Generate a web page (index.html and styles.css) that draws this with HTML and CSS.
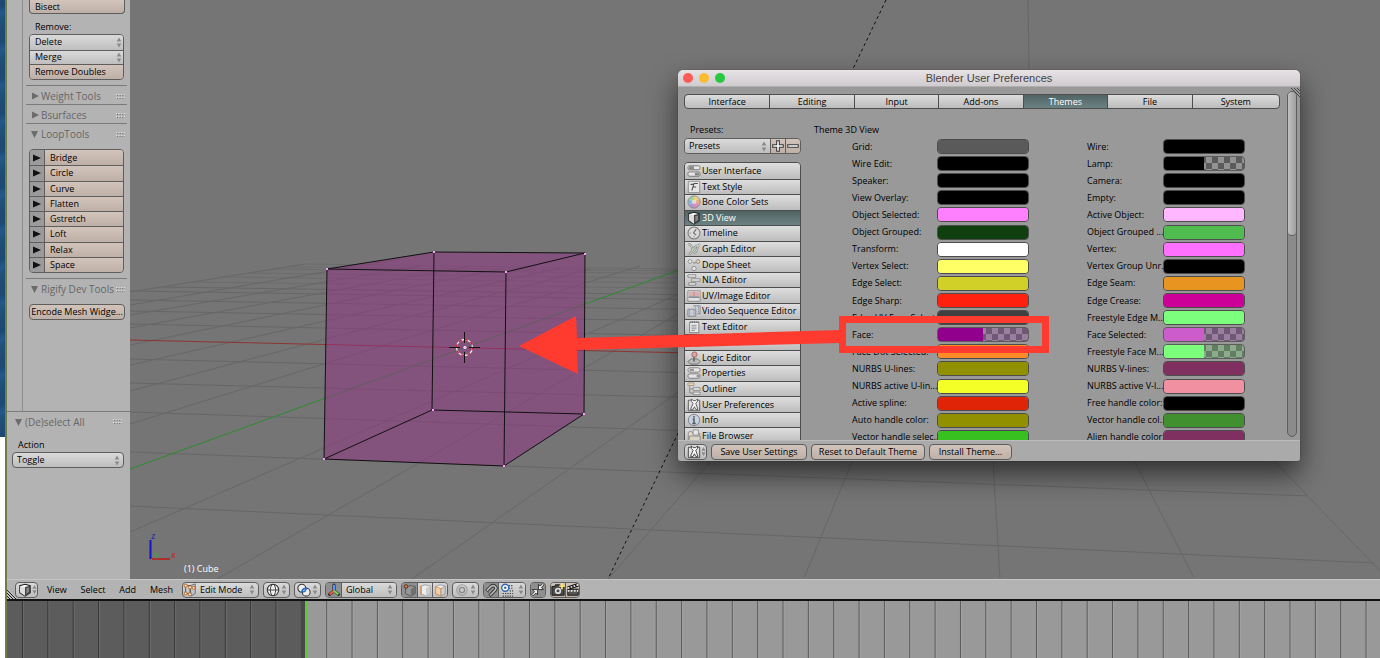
FILE: index.html
```html
<!DOCTYPE html>
<html lang="en">
<head>
<meta charset="utf-8">
<title>Blender</title>
<link rel="stylesheet" href="styles.css">
</head>
<body>
<svg class="defs" aria-hidden="true">
  <symbol id="arrows" viewBox="0 0 6 12"><path d="M3 0.5 5.5 5H0.5zM3 11.5 5.5 7H0.5z" fill="#8a8a8a"/></symbol>
  <symbol id="grip" viewBox="0 0 9 5"><path d="M0 .5h9M0 3.5h9" stroke="#e6e6e6" stroke-dasharray="1 1.6"/><path d="M1 1.5h9M1 4.500h9" stroke="#777" stroke-dasharray="1 1.600"/></symbol>
  <symbol id="hatch" viewBox="0 0 9 9"><path d="M0 0l9 9M0 3l6 6M0 6l3 3" stroke="#222"/><path d="M1 0l8 8M0 2l7 7M0 5l4 4" stroke="#ddd" stroke-width=".5"/></symbol>
  <symbol id="hatch-top" viewBox="0 0 9 9"><path d="M0 0l9 9M3 0l6 6M6 0l3 3" stroke="#333" stroke-width=".8"/></symbol>
  <symbol id="down" viewBox="0 0 8 8"><path d="M0 1h7L3.500 8z" fill="#6b6b6b"/></symbol>
  <symbol id="right" viewBox="0 0 8 8"><path d="M1 0.500v7L8 4z" fill="#6b6b6b"/></symbol>
  <symbol id="play" viewBox="0 0 8 8"><path d="M0 0.500v7L8 4z" fill="#111"/></symbol>
  <symbol id="cube" viewBox="0 0 16 16"><path d="M8 1.500 14 3v8l-6 4-6-4V3z" fill="#fff" stroke="#222" stroke-width="1.200"/><path d="M8 4.500 14 3v8l-6 4z" fill="#444"/><path d="M2.500 3.500 8 5v9.500l-5.500-4z" fill="#ddd"/><path d="M9.500 6 12.500 5v5l-3 2.500z" fill="#888"/></symbol>
  <symbol id="ui" viewBox="0 0 16 16"><g stroke="#555" fill="#eee"><rect x="1" y="2" width="14" height="4.500" rx="2"/><rect x="1" y="9" width="14" height="5" rx="2"/></g><path d="M2 4.200h6M9 11.500h5" stroke="#777" stroke-width="3"/><path d="M3 8h8" stroke="#aaa"/></symbol>
  <symbol id="style" viewBox="0 0 16 16"><path d="M1.500 1.500h13v13h-13z" fill="#eee" stroke="#777"/><path d="M5.500 12 8 4h4.500M6.500 8h4M4 5h3" fill="none" stroke="#333" stroke-width="1.200"/></symbol>
  <symbol id="colors" viewBox="0 0 16 16"><path d="M8 8V1a7 7 0 0 1 6 3.500z" fill="#f3d36b"/><path d="M8 8l6-3.500a7 7 0 0 1 0 7z" fill="#f0a36f"/><path d="M8 8l6 3.500A7 7 0 0 1 8 15z" fill="#dd7fb8"/><path d="M8 8v7a7 7 0 0 1-6-3.500z" fill="#a98ae0"/><path d="M8 8l-6 3.500a7 7 0 0 1 0-7z" fill="#75b4e4"/><path d="M8 8 2 4.500A7 7 0 0 1 8 1z" fill="#92d08d"/><circle cx="8" cy="8" r="7" fill="none" stroke="#777"/><circle cx="8" cy="8" r="2.500" fill="#fff" opacity=".6"/></symbol>
  <symbol id="clock" viewBox="0 0 16 16"><circle cx="8" cy="8" r="6.800" fill="#ddd" stroke="#666" stroke-width="1.200"/><path d="M10.500 3.500 7.500 8l3 2.500" fill="none" stroke="#555" stroke-width="1.300"/><path d="M3 8h1.500M8 13v-1.500" stroke="#777"/></symbol>
  <symbol id="graph" viewBox="0 0 16 16"><path d="M1 3c6-2 4 9 8 9 3 0 2-9 6-9M2 14c3 0 4-5 6-7s3-4 7-3" fill="none" stroke="#777" stroke-width="2.600"/><path d="M1 3c6-2 4 9 8 9 3 0 2-9 6-9M2 14c3 0 4-5 6-7s3-4 7-3" fill="none" stroke="#c5d2c0" stroke-width="1.200"/></symbol>
  <symbol id="dope" viewBox="0 0 16 16"><g fill="#eee" stroke="#777"><circle cx="3.500" cy="4" r="2.200"/><circle cx="12.500" cy="4" r="2.200" fill="#f0c8a0"/><circle cx="8" cy="12" r="2.500"/></g><path d="M7 5.500h3" stroke="#555"/></symbol>
  <symbol id="nla" viewBox="0 0 16 16"><g fill="#e4e4e4" stroke="#777"><path d="M1 2h9v3H1zM5 6.500h10v3H5zM2 11h8v3H2z"/></g></symbol>
  <symbol id="image" viewBox="0 0 16 16"><path d="M1 2h14v12H1z" fill="#e8e8e8" stroke="#777"/><path d="M2 3h12v5H2z" fill="#dca9a9"/><path d="M2 8.500h12v1.500H2z" fill="#5a5a6a"/><path d="M8 3v5" stroke="#b77"/></symbol>
  <symbol id="video" viewBox="0 0 16 16"><path d="M1 6h9v8H1zM7 2h8v9h-3" fill="#c9ced8" stroke="#6a7280"/><path d="M3 7v6M8 7v6M13 3v7M9.500 3v2" stroke="#6a7280" stroke-dasharray="1.500 1"/></symbol>
  <symbol id="text" viewBox="0 0 16 16"><path d="M3 2.500h10.500v12H3z" fill="#f2f2f2" stroke="#666"/><path d="M5 6h6M5 8h6M5 10h6M5 12h4" stroke="#778"/><path d="M4 2.500h9" stroke="#444" stroke-width="2" stroke-dasharray="1 1"/></symbol>
  <symbol id="node" viewBox="0 0 16 16"><path d="M1 3h6v6H1zM9 7h6v6H9zM7 6h2v4" fill="#ddd" stroke="#777"/></symbol>
  <symbol id="logic" viewBox="0 0 16 16"><path d="M1 12l4-3h7l3 3-3 3H4z" fill="#b9b9b9" stroke="#555"/><path d="M8 12V5" stroke="#555" stroke-width="2"/><circle cx="8.500" cy="4" r="3" fill="#d99" stroke="#844"/></symbol>
  <symbol id="props" viewBox="0 0 16 16"><g fill="#eee" stroke="#666"><rect x="1" y="2" width="14" height="5" rx="2.500"/><rect x="1" y="9" width="14" height="5" rx="2.500"/></g><path d="M3 4.500h5M11 11.500h3" stroke="#888" stroke-width="2.500"/></symbol>
  <symbol id="outliner" viewBox="0 0 16 16"><path d="M3 4v8.500h4M3 8h4" fill="none" stroke="#777"/><path d="M1 1h7v3H1z" fill="#f0d3a0" stroke="#987"/><path d="M7 6.500h8v3H7zM7 11.500h8v3H7z" fill="#eee" stroke="#777"/></symbol>
  <symbol id="prefs" viewBox="0 0 16 16"><path d="M4.500 2.500h-3v12h13v-12h-2" fill="#e4e4e4" stroke="#333"/><path d="M5 1v3l2 2-3 7h3l1.500-3 1.500 3h2.500L10 6l2-2V1l-2 2H7z" fill="#fff" stroke="#333"/></symbol>
  <symbol id="info" viewBox="0 0 16 16"><circle cx="8" cy="8" r="6.500" fill="#c8d4e4" stroke="#667"/><path d="M8 3.500v2M6.500 7H8v4.500M6 12h4" stroke="#345" stroke-width="1.800" fill="none"/></symbol>
  <symbol id="files" viewBox="0 0 16 16"><path d="M1.500 14V5l1-2h3l1 2h8v9z" fill="#eadfc4" stroke="#777"/><path d="M7 1h6v6H7z" fill="#eee" stroke="#777"/><path d="M2 14l1-6h12v6z" fill="#ddd6c4" stroke="#777"/></symbol>
  <symbol id="edit" viewBox="0 0 16 16"><path d="M8 3l6-2v11l-5 3z" fill="#c4c4c4" stroke="#666"/><path d="M3 3h5v9H3z" fill="none" stroke="#5a4636"/><g fill="#fff" stroke="#b5682c"><path d="M1.500 1.500h3v3h-3zM1.500 10.500h3v3h-3zM6.500 3.500h3v3h-3zM6.500 11.500h3v3h-3zM11 4h2.500v3H11z"/></g></symbol>
  <symbol id="globe" viewBox="0 0 16 16"><circle cx="8" cy="8" r="6.500" fill="#eee" stroke="#333" stroke-width="1.200"/><ellipse cx="8" cy="8" rx="3" ry="6.500" fill="none" stroke="#333"/><path d="M1.500 8h13" stroke="#333"/></symbol>
  <symbol id="pivot" viewBox="0 0 16 16"><circle cx="5.500" cy="6" r="4.500" fill="#eee" stroke="#333" stroke-width="1.200"/><circle cx="10.500" cy="10.500" r="4.500" fill="#eee" stroke="#333" stroke-width="1.200"/><path d="M5.500 10.500a5 5 0 0 1 5-4.500 5 5 0 0 1-5 4.500z" fill="#acd0ff" stroke="#2a6ac0" stroke-width="1.800"/></symbol>
  <symbol id="axes" viewBox="0 0 16 16"><g stroke="#222" stroke-width="3.600" stroke-linecap="round"><path d="M8 8.500V2.500M8 9l-5 4M8 9l5 4"/></g><path d="M8 9V2" stroke="#5b94f0" stroke-width="2.400"/><path d="M8 9l-5 4" stroke="#ef5c4a" stroke-width="2.400"/><path d="M8 9l5 4" stroke="#7bd05c" stroke-width="2.400"/></symbol>
  <symbol id="vert" viewBox="0 0 16 16"><path d="M8 3l6 1v8l-5 3-6-3V5z" fill="#969696" stroke="#555"/><path d="M9 7l5-3v8l-5 3z" fill="#707070"/><circle cx="3.500" cy="4" r="2" fill="#f0823a" stroke="#422"/></symbol>
  <symbol id="edge" viewBox="0 0 16 16"><path d="M8 2l6 1.500V12l-5 3-6-3V4z" fill="#eee" stroke="#999"/><path d="M9 6l5-2.500V12l-5 3z" fill="#ccc"/><path d="M3.500 3v10" stroke="#dc9862" stroke-width="2"/></symbol>
  <symbol id="facesel" viewBox="0 0 16 16"><path d="M8 2l6 1.500V12l-5 3-6-3V4z" fill="#eee" stroke="#999"/><path d="M3 4l6 2.500V15l-6-3z" fill="#f6cda8" stroke="#d08a52"/><path d="M9 6.500l5-3V12l-5 3z" fill="#ccc" stroke="#a98"/></symbol>
  <symbol id="ring" viewBox="0 0 16 16"><circle cx="8" cy="8" r="6" fill="none" stroke="#999" stroke-width="1.200"/><circle cx="8" cy="8" r="3" fill="#ccc" stroke="#888" stroke-width="1.600"/></symbol>
  <symbol id="magnet" viewBox="0 0 16 16"><path d="M3 9l5-5c4-3 8 2 4 5l-5 5" fill="none" stroke="#333" stroke-width="4"/><path d="M3 9l5-5c4-3 8 2 4 5l-5 5" fill="none" stroke="#b5b5b5" stroke-width="2"/><path d="M2 8l3 3M5 13l3 3" stroke="#444"/></symbol>
  <symbol id="snap" viewBox="0 0 16 16"><path d="M10 3h5M10 6h5M3 12h12M3 15h12M11 9h4" stroke="#444" stroke-dasharray="1.500 1.200" stroke-width="1.300"/><circle cx="6" cy="5.500" r="4" fill="#fff" stroke="#3465a5" stroke-width="1.600"/><circle cx="6" cy="5.500" r="1.400" fill="#3465a5"/></symbol>
  <symbol id="pick" viewBox="0 0 16 16"><path d="M1.500 7.500h6v6l-2-2-3 3-1.500-1.500 3-3zM8.500 1.500l2 2 3-3L15 2l-3 3 2 2.500H8.500z" fill="#f4f4f4" stroke="#222"/></symbol>
  <symbol id="camera" viewBox="0 0 16 16"><path d="M1 4h3l1-2h5l1 2h4v10H1z" fill="#4a4a4a" stroke="#111"/><circle cx="8" cy="9" r="3.600" fill="#ddd"/><circle cx="8" cy="9" r="1.700" fill="#444"/><path d="M12.500 0v7M9.500 3.500h6" stroke="#f7e36b" stroke-width="2"/></symbol>
  <symbol id="clap" viewBox="0 0 16 16"><path d="M2 7h12v7H2z" fill="#555" stroke="#111"/><path d="M2 9h12" stroke="#eee" stroke-width="2" stroke-dasharray="2 1.500"/><path d="M2 6l12-4" stroke="#111" stroke-width="4"/><path d="M2 6l12-4" stroke="#eee" stroke-width="2" stroke-dasharray="2 1.500"/></symbol>
  <symbol id="plus" viewBox="0 0 16 16"><path d="M6.500 2h3v4.500H14v3H9.500V14h-3V9.500H2v-3h4.500z" fill="#fff" stroke="#333" stroke-width="1.200"/></symbol>
  <symbol id="minus" viewBox="0 0 16 16"><path d="M2 6.500h12v3H2z" fill="#fff" stroke="#333" stroke-width="1.200"/></symbol>
</svg>

<div class="desktop">
  <div class="wallpaper"></div>
  <div class="app">
    <main class="work">
      <aside class="shelf">
        <div class="tools">
          <button class="btn lone">Bisect</button>
          <p class="caption">Remove:</p>
          <div class="stack three">
            <button class="btn light">Delete<svg class="arr"><use href="#arrows"/></svg></button>
            <button class="btn light">Merge<svg class="arr"><use href="#arrows"/></svg></button>
            <button class="btn">Remove Doubles</button>
          </div>
          <button class="panel"><svg class="tri"><use href="#right"/></svg>Weight Tools<svg class="grip"><use href="#grip"/></svg></button>
          <button class="panel"><svg class="tri"><use href="#right"/></svg>Bsurfaces<svg class="grip"><use href="#grip"/></svg></button>
          <button class="panel open"><svg class="tri"><use href="#down"/></svg>LoopTools<svg class="grip"><use href="#grip"/></svg></button>
          <div class="stack loop">
            <div><button class="exp" aria-label="Bridge options"><svg class="tri"><use href="#play"/></svg></button><button class="btn">Bridge</button></div>
            <div><button class="exp" aria-label="Circle options"><svg class="tri"><use href="#play"/></svg></button><button class="btn">Circle</button></div>
            <div><button class="exp" aria-label="Curve options"><svg class="tri"><use href="#play"/></svg></button><button class="btn">Curve</button></div>
            <div><button class="exp" aria-label="Flatten options"><svg class="tri"><use href="#play"/></svg></button><button class="btn">Flatten</button></div>
            <div><button class="exp" aria-label="Gstretch options"><svg class="tri"><use href="#play"/></svg></button><button class="btn">Gstretch</button></div>
            <div><button class="exp" aria-label="Loft options"><svg class="tri"><use href="#play"/></svg></button><button class="btn">Loft</button></div>
            <div><button class="exp" aria-label="Relax options"><svg class="tri"><use href="#play"/></svg></button><button class="btn">Relax</button></div>
            <div><button class="exp" aria-label="Space options"><svg class="tri"><use href="#play"/></svg></button><button class="btn">Space</button></div>
          </div>
          <button class="panel open"><svg class="tri"><use href="#down"/></svg>Rigify Dev Tools<svg class="grip"><use href="#grip"/></svg></button>
          <button class="btn encode">Encode Mesh Widge...</button>
        </div>
        <div class="operator">
          <button class="panel"><svg class="tri"><use href="#down"/></svg>(De)select All<svg class="grip"><use href="#grip"/></svg></button>
          <label class="caption" for="action">Action</label>
          <div class="pick"><select id="action"><option>Toggle</option></select><svg class="arr"><use href="#arrows"/></svg></div>
        </div>
      </aside>
      <section class="view">
        <svg class="scene" viewBox="130 0 1250 579" preserveAspectRatio="xMinYMin slice">
          <g stroke="#676767" fill="none" stroke-width="1">
            <path d="M130 506 1374 563M130 452 1308 496M130 412 900 438M130 383 900 403M130 359 900 378M130 324 900 340M130 311 900 325M130 300 900 313M130 291 900 303M163 287 900 298"/>
            <path d="M194 282 900 291M222 277 900 286M248 273 900 281M272 269 900 276M290 267 900 273M305 264 900 272" stroke="#6c6c6c"/>
            <path d="M130 292 305 264M130 305 400 259M130 315 420 266M130 328 470 266M130 345 500 269M130 365 560 268M130 391 590 269M130 424 640 266M130 532 677 295M217 579 720 290M412 579 720 363M609 578 710 462M804 578 852 462M1000 578 993 462M1194 578 1135 462M1380 571 1275 462"/>
            <path d="M1028 0 1029 70" stroke="#666"/>
          </g>
          <path d="M130 340 690 353" stroke="#8e3434"/>
          <path d="M130 469 690 266" stroke="#2f8a2f"/>
          <path d="M886 0 608 579" stroke="#111" stroke-dasharray="3 3" stroke-width="1"/>
          <path d="M327 269 434 252 585 253 584 414 504 466 324 459z" fill="#913287" fill-opacity=".5"/>
          <path d="M327 269 434 252 585 253 506 272zM324 459 432 410 584 414 504 466zM327 269 324 459M434 252 432 410M585 253 584 414M506 272 504 466" stroke="#111" fill="none"/>
          <path d="M326 269h2M433 252h2M584 254h2M505 272h2M432 410h2M583 414h2M323 459h2M503 466h2" stroke="#ff9cff" stroke-width="2"/>
          <circle cx="464.500" cy="347.500" r="8" fill="none" stroke="#eee" stroke-width="1.300"/>
          <circle cx="464.500" cy="347.500" r="8" fill="none" stroke="#c8202c" stroke-width="1.300" stroke-dasharray="3.140"/>
          <path d="M449 347.500h11M469 347.500h11M464.500 332v11M464.500 352v11" stroke="#111"/>
          <circle cx="465" cy="347.500" r="2.200" fill="#f2c0ee" stroke="#444" stroke-width=".7"/>
          <path d="M150.500 559v-19" stroke="#1414c8" stroke-width="2"/><path d="M152 559h18" stroke="#c01414" stroke-width="1.500"/>
          <path d="M154 553l2 2.500 2-2.500M156 555.500v3" stroke="#28b428" fill="none"/>
          <text x="151" y="539" class="axis" fill="#1818c0">z</text>
          <text x="171" y="558" class="axis" fill="#c81818">x</text>
          <text x="184" y="572" class="name" fill="#fff">(1) Cube</text>
        </svg>
      </section>
    </main>

    <header class="bar">
      <svg class="corner"><use href="#hatch"/></svg>
      <button class="chip ico" aria-label="Editor type"><svg><use href="#cube"/></svg><svg class="arr"><use href="#arrows"/></svg></button>
      <nav class="menus"><button>View</button><button>Select</button><button>Add</button><button>Mesh</button></nav>
      <div class="pick mode"><svg class="lead"><use href="#edit"/></svg><select aria-label="Mode"><option>Edit Mode</option></select><svg class="arr"><use href="#arrows"/></svg></div>
      <button class="chip wide" aria-label="Shading"><svg><use href="#globe"/></svg><svg class="arr"><use href="#arrows"/></svg></button>
      <button class="chip wide" aria-label="Pivot"><svg><use href="#pivot"/></svg><svg class="arr"><use href="#arrows"/></svg></button>
      <div class="joined orient"><button class="on" aria-label="Manipulator"><svg><use href="#axes"/></svg></button><div class="pick"><select aria-label="Orientation"><option>Global</option></select><svg class="arr"><use href="#arrows"/></svg></div></div>
      <div class="joined modes"><button class="on" aria-label="Vertex"><svg><use href="#vert"/></svg></button><button aria-label="Edge"><svg><use href="#edge"/></svg></button><button aria-label="Face"><svg><use href="#facesel"/></svg></button></div>
      <button class="chip wide" aria-label="Proportional editing"><svg><use href="#ring"/></svg><svg class="arr"><use href="#arrows"/></svg></button>
      <div class="joined"><button class="on" aria-label="Snap"><svg><use href="#magnet"/></svg></button><button class="snapto" aria-label="Snap element"><svg><use href="#snap"/></svg><svg class="arr"><use href="#arrows"/></svg></button></div>
      <div class="joined"><button class="on" aria-label="Automerge"><svg><use href="#pick"/></svg></button></div>
      <div class="joined warm"><button aria-label="Render"><svg><use href="#camera"/></svg></button><button aria-label="Animation"><svg><use href="#clap"/></svg></button></div>
    </header>

    <section class="timeline">
      <svg width="100%" height="100%">
        <defs><pattern id="ticks" x="15" width="25.350" height="57" patternUnits="userSpaceOnUse"><path d="M.5 0v57" stroke="#000" stroke-opacity=".42"/><path d="M1.500 0v57" stroke="#fff" stroke-opacity=".1"/></pattern></defs>
        <rect width="100%" height="100%" fill="#999"/>
        <rect width="298" height="100%" fill="#5c5c5c"/>
        <rect width="100%" height="100%" fill="url(#ticks)"/>
        <rect x="294" width="4" height="100%" fill="#484848"/>
        <rect x="298" width="3" height="100%" fill="#5ec83a"/>
      </svg>
    </section>

    <section class="window">
      <div class="title"><span class="lights"><i class="red"></i><i class="amber"></i><i class="green"></i></span><h1>Blender User Preferences</h1></div>
      <svg class="resize"><use href="#hatch-top"/></svg>
      <div class="body">
        <div class="content">
          <nav class="tabs"><button>Interface</button><button>Editing</button><button>Input</button><button>Add-ons</button><button class="active">Themes</button><button>File</button><button>System</button></nav>
          <div class="columns">
            <div class="side">
              <label class="caption" for="presets">Presets:</label>
              <div class="joined presets"><div class="pick"><select id="presets"><option>Presets</option></select><svg class="arr"><use href="#arrows"/></svg></div><button aria-label="Add preset"><svg><use href="#plus"/></svg></button><button aria-label="Remove preset"><svg><use href="#minus"/></svg></button></div>
              <div class="list">
                <button><svg><use href="#ui"/></svg>User Interface</button>
                <button><svg><use href="#style"/></svg>Text Style</button>
                <button><svg><use href="#colors"/></svg>Bone Color Sets</button>
                <button class="active"><svg><use href="#cube"/></svg>3D View</button>
                <button><svg><use href="#clock"/></svg>Timeline</button>
                <button><svg><use href="#graph"/></svg>Graph Editor</button>
                <button><svg><use href="#dope"/></svg>Dope Sheet</button>
                <button><svg><use href="#nla"/></svg>NLA Editor</button>
                <button><svg><use href="#image"/></svg>UV/Image Editor</button>
                <button><svg><use href="#video"/></svg>Video Sequence Editor</button>
                <button><svg><use href="#text"/></svg>Text Editor</button>
                <button><svg><use href="#node"/></svg>Node Editor</button>
                <button><svg><use href="#logic"/></svg>Logic Editor</button>
                <button><svg><use href="#props"/></svg>Properties</button>
                <button><svg><use href="#outliner"/></svg>Outliner</button>
                <button><svg><use href="#prefs"/></svg>User Preferences</button>
                <button><svg><use href="#info"/></svg>Info</button>
                <button><svg><use href="#files"/></svg>File Browser</button>
              </div>
            </div>
            <div class="theme">
              <h2>Theme 3D View</h2>
              <div class="fields">
                <div class="col first">
                  <label>Grid:<input type="color" value="#5a5a5a"></label>
                  <label>Wire Edit:<input type="color" value="#000000"></label>
                  <label>Speaker:<input type="color" value="#000000"></label>
                  <label>View Overlay:<input type="color" value="#000000"></label>
                  <label>Object Selected:<input type="color" value="#ff80ff"></label>
                  <label>Object Grouped:<input type="color" value="#0f3f0f"></label>
                  <label>Transform:<input type="color" value="#ffffff"></label>
                  <label>Vertex Select:<input type="color" value="#ffff66"></label>
                  <label>Edge Select:<input type="color" value="#d0d028"></label>
                  <label>Edge Sharp:<input type="color" value="#ff2010"></label>
                  <label>Edge UV Face Select:<input type="color" value="#404040"></label>
                  <label>Face:<span class="alpha violet"><input type="color" value="#91008c"></span></label>
                  <label>Face Dot Selected:<input type="color" value="#ff8c28"></label>
                  <label>NURBS U-lines:<input type="color" value="#909000"></label>
                  <label>NURBS active U-lin...<input type="color" value="#f4ff28"></label>
                  <label>Active spline:<input type="color" value="#e02408"></label>
                  <label>Auto handle color:<input type="color" value="#909000"></label>
                  <label>Vector handle selec...<input type="color" value="#38c020"></label>
                </div>
                <div class="col second">
                  <label>Wire:<input type="color" value="#000000"></label>
                  <label>Lamp:<span class="alpha"><input type="color" value="#000000"></span></label>
                  <label>Camera:<input type="color" value="#000000"></label>
                  <label>Empty:<input type="color" value="#000000"></label>
                  <label>Active Object:<input type="color" value="#ffb8ff"></label>
                  <label>Object Grouped ...<input type="color" value="#50bc50"></label>
                  <label>Vertex:<input type="color" value="#ff70ff"></label>
                  <label>Vertex Group Unr...<input type="color" value="#000000"></label>
                  <label>Edge Seam:<input type="color" value="#e89420"></label>
                  <label>Edge Crease:<input type="color" value="#cc0099"></label>
                  <label>Freestyle Edge M...<input type="color" value="#7cff7c"></label>
                  <label>Face Selected:<span class="alpha violet"><input type="color" value="#cc5ccc"></span></label>
                  <label>Freestyle Face M...<span class="alpha lime"><input type="color" value="#7cff7c"></span></label>
                  <label>NURBS V-lines:<input type="color" value="#803060"></label>
                  <label>NURBS active V-l...<input type="color" value="#f090a0"></label>
                  <label>Free handle color:<input type="color" value="#000000"></label>
                  <label>Vector handle col...<input type="color" value="#409030"></label>
                  <label>Align handle color:<input type="color" value="#803060"></label>
                </div>
              </div>
            </div>
          </div>
        </div>
        <div class="scroll"><div class="thumb"></div></div>
      </div>
      <footer>
        <button class="chip ico" aria-label="Editor type"><svg><use href="#prefs"/></svg><svg class="arr"><use href="#arrows"/></svg></button>
        <button class="btn save">Save User Settings</button>
        <button class="btn reset">Reset to Default Theme</button>
        <button class="btn install">Install Theme...</button>
      </footer>
    </section>
  </div>
  <svg class="callout" aria-hidden="true">
    <rect x="842.500" y="319.500" width="203" height="30" fill="none" stroke="#ff3b30" stroke-width="7"/>
    <path d="M519 346 576 316 577 338 840 330V343L577 350 578 374z" fill="#ff3b30"/>
  </svg>
</div>
</body>
</html>
```
FILE: styles.css
```css
* { box-sizing: border-box; }

body {
  margin: 0;
  overflow: hidden;
  font: 9px/12px "Open Sans", "Noto Sans", sans-serif;
  color: #000;
}

button, select, input { font: inherit; color: inherit; margin: 0; }
button { display: flex; align-items: center; padding: 0; border: 0; background: none; white-space: nowrap; }
svg { display: block; flex: none; }
p, h1, h2 { margin: 0; font: inherit; }
.defs { position: absolute; width: 0; height: 0; }

.desktop { position: relative; display: flex; height: 100vh; background: #fff; }
.wallpaper { width: 5px; height: 437px; background: repeating-linear-gradient(160deg, #1b4a75 0 6px, #24588a 13px, #1f5078 21px, #1b4a75 34px); }
.app {
  position: relative;
  flex: 1;
  min-width: 0;
  display: flex;
  flex-direction: column;
  border-left: 2px solid #6f7d4c;
}
.work { flex: 1; min-height: 0; display: flex; }

/* tool shelf */
.shelf { width: 123px; display: flex; flex-direction: column; background: #b3b3b3; }
.tools {
  flex: 1;
  min-height: 0;
  overflow: hidden;
  margin-left: 15px;
  padding: 0 3px;
  border-left: 1px solid #8c8c8c;
}
.caption { display: block; padding-left: 6px; }
.tools > .caption { margin: 0 3px; padding-top: 7px; height: 20px; }

.btn {
  justify-content: flex-start;
  padding: 0 5px;
  background: linear-gradient(#d3c4bb, #bfb0a7);
}
.btn.light, .pick, .chip, .joined > button { background: linear-gradient(#dadada, #bebebe); }
.btn .arr { margin-left: auto; margin-right: -4px; }
.arr { width: 6px; height: 11px; }
.lone, .encode { width: 96px; margin: 0 3px; height: 16px; border: 1px solid #5e5e5e; border-radius: 4px; }
.lone { height: 14px; border-top: 0; border-radius: 0 0 4px 4px; }
.encode { justify-content: center; padding: 0; }
.stack { display: grid; grid-auto-rows: 1fr; margin: 0 3px 5px; border: 1px solid #5e5e5e; border-radius: 4px; overflow: hidden; }
.stack > * + * { border-top: 1px solid #5e5e5e; }
.three { height: 46px; }
.loop { height: 124px; }
.loop > div { display: flex; }
.loop .btn { flex: 1; }
.exp { width: 15px; justify-content: center; background: #9b9b9b; border-right: 1px solid #5e5e5e; }
.tri { width: 8px; height: 8px; }
.panel {
  width: 100%;
  height: 19px;
  padding: 2px 2px 0 5px;
  gap: 2px;
  border-top: 1px solid #7b7b7b;
  color: #666;
  font-size: 10px;
}
.open { margin-bottom: 7px; }
.grip { width: 9px; height: 5px; margin-left: auto; }
.operator { height: 168px; padding: 0 6px 0 5px; border-top: 1px solid #7b7b7b; }
.operator .panel { border: 0; padding: 0 2px 0 3px; margin-bottom: 8px; }
.operator .caption { height: 13px; }

/* select with its arrows laid over the right end */
.pick {
  display: grid;
  grid-template-columns: 1fr 9px;
  align-items: center;
  height: 16px;
  border: 1px solid #5e5e5e;
  border-radius: 4px;
}
.pick select { grid-area: 1 / 1 / 2 / 3; width: 100%; height: 14px; padding: 0 4px; border: 0; background: none; appearance: none; }
.pick .arr { grid-area: 1 / 2 / 2 / 3; pointer-events: none; }

/* viewport */
.view { flex: 1; min-width: 0; background: #757575; }
.scene { width: 100%; height: 100%; }
.axis, .name { font-size: 9px; }

/* header bar */
.bar {
  position: relative;
  display: flex;
  align-items: center;
  gap: 4px;
  height: 22px;
  padding: 0 8px;
  background: #b3b3b3;
  border-top: 1px solid #c6c6c6;
  border-bottom: 2px solid #111;
}
.bar svg:not(.arr), .chip svg:not(.arr), .joined svg:not(.arr), .list svg { width: 14px; height: 14px; }
.bar .corner { position: absolute; left: 0; bottom: 0; }
.bar svg.corner:not(.arr) { width: 9px; height: 9px; }
.chip { height: 16px; padding: 0 2px; justify-content: space-between; border: 1px solid #5e5e5e; border-radius: 4px; }
.ico { width: 23px; }
.ico .arr { width: 5px; }
.wide { width: 27px; }
.menus { display: flex; justify-content: space-between; width: 126px; margin: 0 5px; }
.mode { width: 77px; grid-template-columns: 16px 1fr 9px; }
.mode .lead { grid-area: 1 / 1; }
.mode select { grid-area: 1 / 2 / 2 / 4; padding: 0 1px; }
.mode .arr { grid-area: 1 / 3; }
.joined { display: flex; height: 16px; border: 1px solid #5e5e5e; border-radius: 4px; overflow: hidden; }
.joined > * + * { border: 0; border-left: 1px solid #5e5e5e; border-radius: 0; }
.joined > button { width: 14px; justify-content: center; }
.modes > button, .orient > button, .presets > button { width: 15px; }
.joined > button.on { background: #8f8f8f; }
.joined > .snapto { width: 27px; gap: 4px; }
.joined .pick { height: 14px; border-radius: 0; }
.orient { width: 72px; }
.orient .pick { flex: 1; }
.warm > button, .presets > button { background: linear-gradient(#d3c4bb, #bfb0a7); }
.timeline { height: 57px; }

/* preferences window */
.window {
  position: absolute;
  left: 671px;
  top: 70px;
  width: 622px;
  height: 391px;
  display: flex;
  flex-direction: column;
  border-radius: 5px 5px 3px 3px;
  overflow: hidden;
  background: #999;
  box-shadow: 0 0 1px rgba(0, 0, 0, .6), 0 13px 28px rgba(0, 0, 0, .6);
}
.resize { position: absolute; right: 0; top: 18px; width: 9px; height: 9px; }
.title {
  display: grid;
  grid-template-columns: 1fr auto 1fr;
  align-items: center;
  height: 17px;
  padding: 0 5px;
  background: linear-gradient(#e6e2e6, #cfcbcf);
  border-bottom: 1px solid #b0b0b0;
}
.title h1 { font: 11px/16px "Liberation Sans", sans-serif; color: #444; }
.lights { display: flex; gap: 6px; }
.lights i { width: 10px; height: 10px; border-radius: 50%; }
.red { background: #fc5b57; }
.amber { background: #fdbc2f; }
.green { background: #2ac840; }
.body { flex: 1; min-height: 0; display: flex; justify-content: space-between; padding: 4px 3px 3px 6px; }
.content { width: 596px; min-height: 0; padding-top: 3px; margin-bottom: -3px; overflow: hidden; }
.tabs { display: grid; grid-template-columns: repeat(6, 85fr) 88fr; height: 15px; border: 1px solid #4e4e4e; border-radius: 4px; overflow: hidden; background: linear-gradient(#dcdcdc, #bcbcbc); }
.tabs button { justify-content: center; }
.tabs button + button { border-left: 1px solid #4e4e4e; }
.tabs .active, .list .active { color: #fff; background: linear-gradient(#506464, #6c8282); }
.columns { display: flex; margin-top: 15px; }
.side { width: 117px; }
.columns .caption, .columns h2 { height: 14px; line-height: 12px; }
.presets { height: 16px; }
.presets .pick { flex: 1; border: 0; }
.list { display: grid; grid-auto-rows: 1fr; height: 282px; margin-top: 8px; border: 1px solid #4e4e4e; border-radius: 4px 4px 0 0; overflow: hidden; }
.list button { gap: 1px; padding: 0 0 0 2px; background: linear-gradient(#dedede, #bdbdbd); }
.list button + button { border-top: 1px solid #4e4e4e; }
.list button:not(.active) svg { opacity: .8; }
.theme { flex: 1; margin-left: 13px; }
.fields { display: flex; gap: 58px; height: 308px; margin-left: 38px; }
.col { display: grid; grid-auto-rows: 1fr; align-items: center; }
.first { width: 177px; }
.second { width: 158px; }
.col label { display: grid; grid-template-columns: minmax(0, 1fr) auto; align-items: center; white-space: nowrap; }
.col input { width: 92px; height: 15px; padding: 0; border: 1px solid #4c4c4c; border-radius: 4px; overflow: hidden; background: none; appearance: none; }
.second input, .second .alpha { width: 82px; }
.col input::-webkit-color-swatch-wrapper { padding: 0; }
.col input::-webkit-color-swatch { border: 0; border-radius: 0; }
.alpha {
  --tint: transparent;
  display: flex;
  width: 92px;
  height: 15px;
  border: 1px solid #5c5c5c;
  border-radius: 4px;
  overflow: hidden;
  background: linear-gradient(var(--tint), var(--tint)), repeating-conic-gradient(#929292 0 25%, #5a5a5a 0 50%) 0 0 / 12px 12px;
}
.violet { --tint: rgba(170, 80, 190, .28); }
.lime { --tint: rgba(124, 255, 124, .22); }
.col .alpha input { width: 50%; height: 13px; border: 0; border-radius: 0; }
.scroll { width: 10px; border: 1px solid #5e5e5e; border-radius: 5px; background: #8b8b8b; }
.thumb { height: 144px; border-bottom: 1px solid #5e5e5e; border-radius: 4px; background: linear-gradient(90deg, #c0c0c0, #a0a0a0); }
.window footer { display: flex; align-items: center; gap: 4px; height: 21px; padding: 1px 6px 0; background: #aaa; border-top: 1px solid #bcbcbc; }
footer .btn { height: 16px; justify-content: center; border: 1px solid #5e5e5e; border-radius: 4px; }
.save { width: 96px; }
.reset { width: 114px; }
.install { width: 83px; }

.callout { position: absolute; left: 0; top: 0; width: 100%; height: 100%; pointer-events: none; }
```
